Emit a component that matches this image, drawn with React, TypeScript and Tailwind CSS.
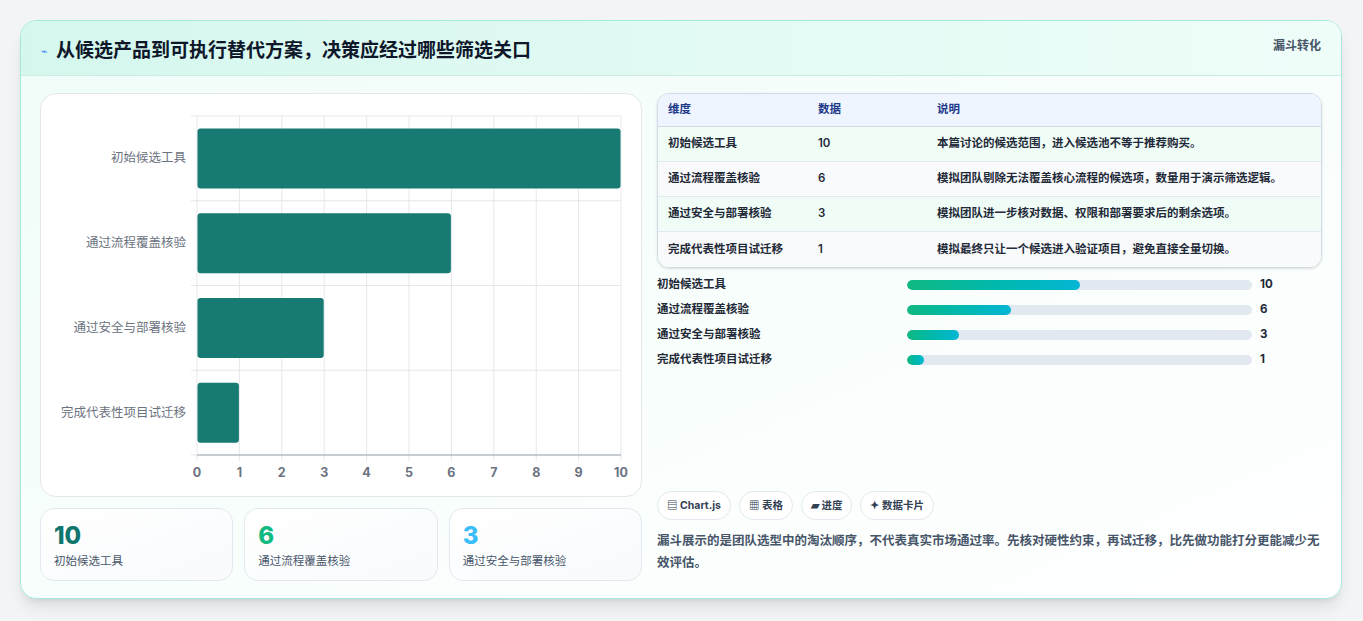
import React from "react";

const cats = ["初始候选工具", "通过流程覆盖核验", "通过安全与部署核验", "完成代表性项目试迁移"];
const vals = [10, 6, 3, 1];
const notes = [
  "本篇讨论的候选范围，进入候选池不等于推荐购买。",
  "模拟团队剔除无法覆盖核心流程的候选项，数量用于演示筛选逻辑。",
  "模拟团队进一步核对数据、权限和部署要求后的剩余选项。",
  "模拟最终只让一个候选进入验证项目，避免直接全量切换。",
];

function Chart() {
  const x0 = 156, x1 = 580, y0 = 22, y1 = 361;
  const w = x1 - x0;
  const bandH = (y1 - y0) / 4;
  return (
    <svg width="600" height="400" className="block">
      {Array.from({ length: 11 }).map((_, i) => (
        <line key={i} x1={x0 + (w * i) / 10} x2={x0 + (w * i) / 10} y1={y0} y2={y1 + 6} stroke="#e5e7eb" />
      ))}
      {[0, 1, 2, 3, 4].map((i) => (
        <line key={i} x1={x0 - 6} x2={x1} y1={y0 + bandH * i} y2={y0 + bandH * i} stroke="#e5e7eb" />
      ))}
      {vals.map((v, i) => (
        <g key={i}>
          <rect x={x0 + 0.5} y={y0 + bandH * i + 12.5} width={(w * v) / 10 - 1} height={60} rx={3} fill="#0f766e" fillOpacity="0.97" />
          <text x={x0 - 11} y={y0 + bandH * i + bandH / 2 + 4} textAnchor="end" fontSize="12.5" fill="#6b7280" fontFamily="Noto Sans CJK SC, sans-serif">{cats[i]}</text>
        </g>
      ))}
      <line x1={x0} x2={x1} y1={y1} y2={y1} stroke="#9ca3af" />
      {Array.from({ length: 11 }).map((_, i) => (
        <text key={i} x={x0 + (w * i) / 10} y={y1 + 22} textAnchor="middle" fontSize="12.5" fontWeight="700" fill="#6b7280" fontFamily="Inter, sans-serif">{i}</text>
      ))}
    </svg>
  );
}

export default function App() {
  return (
    <div className="w-[1363px] h-[621px] bg-[#f3f4f6] pt-[20px] pl-[20px]" style={{ fontFamily: "Inter, 'Noto Sans CJK SC', sans-serif" }}>
      <div className="w-[1322px] h-[579px] rounded-[16px] border border-[#a7e8dc] bg-gradient-to-br from-[#f0fdf8] to-white overflow-hidden shadow-lg">
        <div className="h-[55px] bg-gradient-to-r from-[#d4f7ee] to-[#effdf9] border-b border-[#c9eee5] flex items-start justify-between px-[20px]">
          <div className="flex items-center gap-[8px] mt-[16px]">
            <span className="text-[#3b82f6] text-[11px]">⌁</span>
            <span className="text-[19px] font-bold text-[#0f172a]">从候选产品到可执行替代方案，决策应经过哪些筛选关口</span>
          </div>
          <span className="mt-[16px] text-[12px] font-bold text-[#475569]">漏斗转化</span>
        </div>
        <div className="flex gap-[15px] px-[19px] pt-[17px]">
          <div className="w-[603px] flex flex-col gap-[11px]">
            <div className="h-[404px] rounded-[16px] border border-[#e5e7eb] bg-white overflow-hidden">
              <Chart />
            </div>
            <div className="grid grid-cols-3 gap-[11px]">
              {[["10", "text-[#0f766e]"], ["6", "text-[#10b981]"], ["3", "text-[#38bdf8]"]].map(([v, c], i) => (
                <div key={i} className="h-[73px] rounded-[14px] border border-[#e2e8f0] bg-gradient-to-br from-white to-[#f8fafc] px-[13px] pt-[12px]">
                  <div className={`text-[24px] font-extrabold leading-[30px] ${c}`}>{v}</div>
                  <div className="text-[11.5px] text-[#475569] mt-[2px]">{cats[i]}</div>
                </div>
              ))}
            </div>
          </div>
          <div className="w-[667px] flex flex-col">
            <div className="rounded-[12px] border border-[#d1dbe6] overflow-hidden text-[11.5px] shadow-sm">
              <div className="flex h-[33px] items-center bg-[#eef5fe] border-b border-[#d1dbe6] font-bold text-[#1e3a8a]">
                <div className="w-[160px] pl-[10px]">维度</div>
                <div className="w-[119px]">数据</div>
                <div>说明</div>
              </div>
              {cats.map((c, i) => (
                <div key={i} className={`flex h-[35px] items-center font-semibold text-[#1f2937] ${i < 3 ? "border-b border-[#e2e8f0]" : ""} ${i % 2 ? "bg-[#f8fafc]" : "bg-[#f0fdf7]"}`}>
                  <div className="w-[160px] pl-[10px]">{c}</div>
                  <div className="w-[119px]">{vals[i]}</div>
                  <div>{notes[i]}</div>
                </div>
              ))}
            </div>
            <div className="mt-[11px] flex flex-col gap-[14px] h-[203px]">
              {cats.map((c, i) => (
                <div key={i} className="flex items-center h-[11px] text-[11.5px] font-semibold text-[#1f2937]">
                  <div className="w-[250px]">{c}</div>
                  <div className="w-[345px] h-[10px] rounded-full bg-[#e2e8f0] overflow-hidden">
                    <div className="h-full rounded-full bg-gradient-to-r from-[#10b981] to-[#06b6d4]" style={{ width: `${vals[i] * 5}%` }} />
                  </div>
                  <div className="ml-[8px] font-bold">{vals[i]}</div>
                </div>
              ))}
            </div>
            <div className="flex gap-[8px] mt-[9px]">
              {["▤ Chart.js", "▦ 表格", "▰ 进度", "✦ 数据卡片"].map((t) => (
                <span key={t} className="h-[29px] px-[9px] flex items-center rounded-full border border-[#e2e8f0] bg-white text-[10.5px] font-bold text-[#334155]">{t}</span>
              ))}
            </div>
            <p className="mt-[10px] text-[12.5px] leading-[22px] font-semibold text-[#475569]">
              漏斗展示的是团队选型中的淘汰顺序，不代表真实市场通过率。先核对硬性约束，再试迁移，比先做功能打分更能减少无效评估。
            </p>
          </div>
        </div>
      </div>
    </div>
  );
}
